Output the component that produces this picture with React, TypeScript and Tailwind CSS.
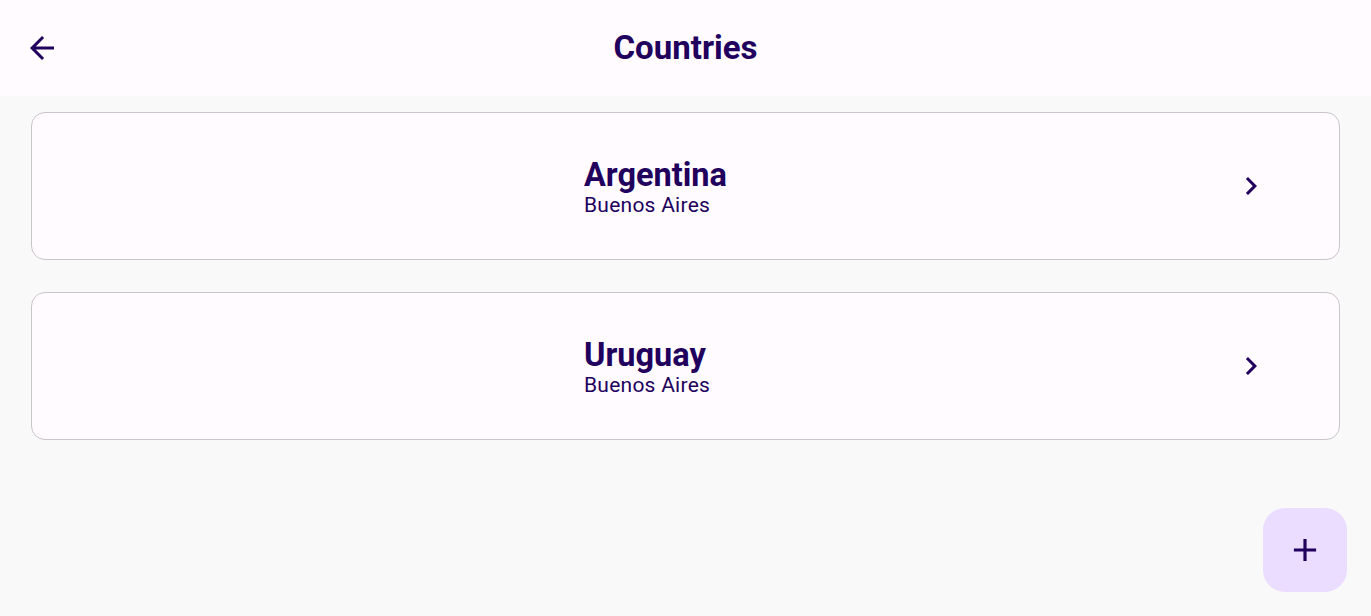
const countries = [
  { name: 'Argentina', capital: 'Buenos Aires' },
  { name: 'Uruguay', capital: 'Buenos Aires' },
];

function ArrowBack() {
  return (
    <svg width="36" height="36" viewBox="0 0 24 24" fill="#21005d">
      <path d="M20 11H7.83l5.59-5.59L12 4l-8 8 8 8 1.41-1.41L7.83 13H20v-2z" />
    </svg>
  );
}

function ChevronRight() {
  return (
    <svg width="36" height="36" viewBox="0 0 24 24" fill="#21005d">
      <path d="M10 6 8.59 7.41 13.17 12l-4.58 4.59L10 18l6-6z" />
    </svg>
  );
}

function Plus() {
  return (
    <svg width="38" height="38" viewBox="0 0 24 24" fill="#21005d">
      <path d="M19 13h-6v6h-2v-6H5v-2h6V5h2v6h6v2z" />
    </svg>
  );
}

export default function App() {
  return (
    <div
      className="relative flex h-[616px] w-full flex-col overflow-hidden bg-[#f9f9f9] text-[#21005d]"
      style={{ fontFamily: 'Roboto, "Noto Sans", sans-serif' }}
    >
      <header className="flex h-24 items-center bg-[#fffbfe] pl-6 pr-6">
        <button className="flex h-9 w-9 items-center justify-center">
          <ArrowBack />
        </button>
        <h1 className="flex-1 pr-9 text-center text-[33px] font-bold">Countries</h1>
      </header>

      <main className="flex flex-col gap-8 px-[31px] pt-4">
        {countries.map((c) => (
          <div
            key={c.name}
            className="flex h-[148px] items-center rounded-[14px] border border-[#c9c5cb] bg-[#fffbfe] pl-[552px] pr-[70px]"
          >
            <div className="flex flex-1 flex-col pt-1">
              <span className="text-[32.5px] font-bold leading-[34px]">{c.name}</span>
              <span className="text-[21px] leading-[26px] tracking-[0.25px]">{c.capital}</span>
            </div>
            <ChevronRight />
          </div>
        ))}
      </main>

      <button className="absolute bottom-6 right-6 flex h-[84px] w-[84px] items-center justify-center rounded-[22px] bg-[#eaddff]">
        <Plus />
      </button>
    </div>
  );
}
